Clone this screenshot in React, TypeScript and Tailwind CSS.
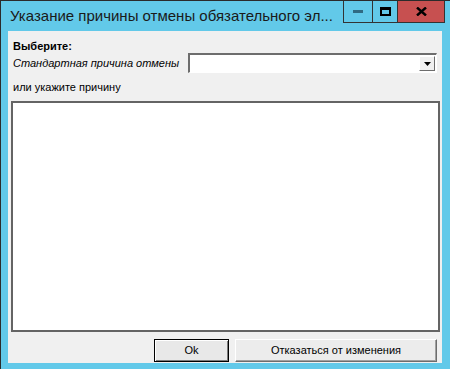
import React from "react";

const ui = { fontFamily: '"Liberation Sans", Arial, sans-serif' };
const title = { fontFamily: '"Liberation Sans", Arial, sans-serif' };

const App = () => {
  return (
    <div className="h-[369px] w-[450px] overflow-hidden">
      <div className="flex h-[369px] w-[450px] flex-col border-l border-t border-[#2b2b2b] bg-[#62c9e9]">
        {/* Title bar */}
        <div className="flex h-[30px] items-start">
          <div className="flex h-[30px] min-w-0 flex-1 items-center overflow-hidden whitespace-nowrap pl-[9px] text-[15px] text-[#1a1a1a]" style={title}>
            Указание причины отмены обязательного эл...
          </div>
          <div className="mr-[5px] flex h-[22px] shrink-0 border-b border-l border-r border-[#333]">
            <div className="flex w-[29px] items-center justify-center border-r border-[#333]">
              <div className="h-[3px] w-[10px] bg-[#2f6a82]" />
            </div>
            <div className="flex w-[25px] items-center justify-center border-r border-[#333]">
              <div className="h-[9px] w-[11px] border-[2px] border-t-[3px] border-black" />
            </div>
            <div className="flex w-[46px] items-center justify-center bg-[#c75050]">
              <svg width="11" height="9" viewBox="0 0 11 9">
                <path d="M1 0.5 L10 8.5 M10 0.5 L1 8.5" stroke="#000" strokeWidth="2.4" />
              </svg>
            </div>
          </div>
        </div>

        {/* Client area */}
        <div className="ml-[7px] flex h-[332px] w-[434px] flex-col bg-[#f0f0f0] text-[11px] text-black" style={ui}>
          <div className="ml-[5px] mt-[8px] h-[14px] font-bold leading-[14px]">Выберите:</div>
          <div className="flex h-[20px] items-center">
            <div className="ml-[5px] w-[175px] italic">Стандартная причина отмены</div>
            <div className="flex h-[20px] w-[249px] border-b border-l-2 border-r border-t-2 border-b-white border-l-[#6d6d6d] border-r-white border-t-[#6d6d6d] bg-white">
              <div className="flex-1" />
              <div className="mr-[1px] mt-[1px] flex h-[15px] w-[16px] items-center justify-center border border-b-[#6d6d6d] border-l-white border-r-[#6d6d6d] border-t-white bg-[#f0f0f0]">
                <svg width="7" height="4" viewBox="0 0 7 4">
                  <path d="M0 0 H7 L3.5 4 Z" fill="#000" />
                </svg>
              </div>
            </div>
          </div>
          <div className="ml-[5px] mt-[7px] h-[14px] leading-[14px]">или укажите причину</div>
          <div className="ml-[3px] mt-[7px] h-[231px] w-[429px] border-2 border-[#646464] bg-white" />
          <div className="mt-[7px] flex justify-end gap-[6px] pr-[5px]">
            <button className="flex h-[23px] w-[75px] items-center justify-center border border-black bg-[#e8e8e8] shadow-[inset_1px_1px_0_#fff,inset_-1px_-1px_0_#7a7a7a]">
              Ok
            </button>
            <button className="flex h-[23px] w-[202px] items-center justify-center border border-b-[#6d6d6d] border-l-white border-r-[#6d6d6d] border-t-white bg-[#ececec] shadow-[inset_-1px_-1px_0_#a0a0a0]">
              Отказаться от изменения
            </button>
          </div>
        </div>
      </div>
    </div>
  );
};

export default App;
